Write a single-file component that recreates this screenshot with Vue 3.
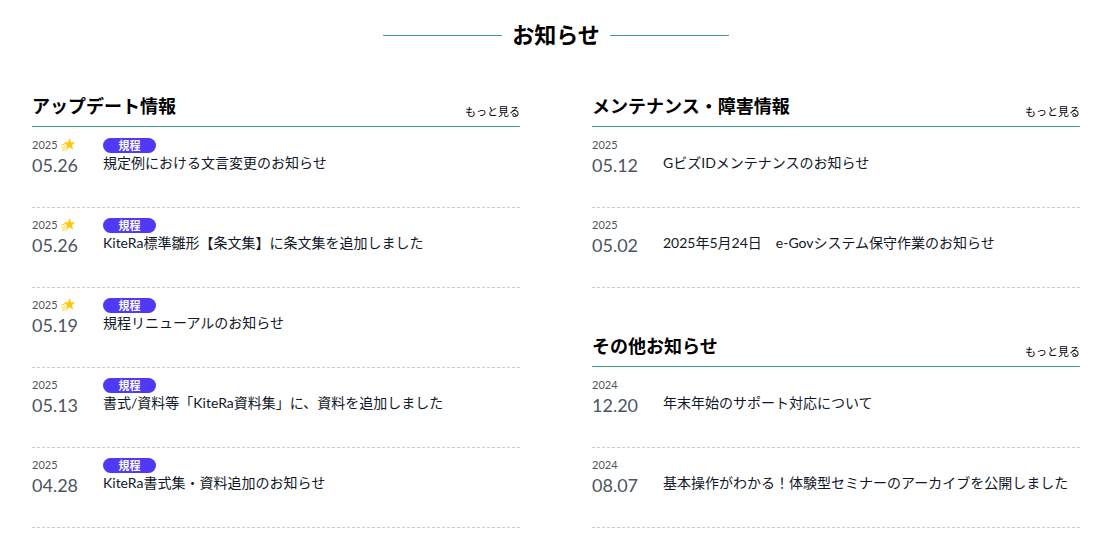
<script setup>
const updates = {
  title: 'アップデート情報',
  items: [
    { year: '2025', day: '05.26', isNew: true, tag: '規程', text: '規定例における文言変更のお知らせ' },
    { year: '2025', day: '05.26', isNew: true, tag: '規程', text: 'KiteRa標準雛形【条文集】に条文集を追加しました' },
    { year: '2025', day: '05.19', isNew: true, tag: '規程', text: '規程リニューアルのお知らせ' },
    { year: '2025', day: '05.13', tag: '規程', text: '書式/資料等「KiteRa資料集」に、資料を追加しました' },
    { year: '2025', day: '04.28', tag: '規程', text: 'KiteRa書式集・資料追加のお知らせ' },
  ],
}
const maintenance = {
  title: 'メンテナンス・障害情報',
  items: [
    { year: '2025', day: '05.12', text: 'GビズIDメンテナンスのお知らせ' },
    { year: '2025', day: '05.02', text: '2025年5月24日　e-Govシステム保守作業のお知らせ' },
  ],
}
const others = {
  title: 'その他お知らせ',
  items: [
    { year: '2024', day: '12.20', text: '年末年始のサポート対応について' },
    { year: '2024', day: '08.07', text: '基本操作がわかる！体験型セミナーのアーカイブを公開しました' },
  ],
}
const columns = [[updates], [maintenance, others]]
</script>

<template>
  <main class="news">
    <h1 class="heading">お知らせ</h1>
    <div class="columns">
      <div v-for="(column, c) in columns" :key="c" class="column">
        <section v-for="section in column" :key="section.title">
          <header class="section-head">
            <h2>{{ section.title }}</h2>
            <a href="#" class="more">もっと見る</a>
          </header>
          <ul class="list">
            <li v-for="item in section.items" :key="item.text" class="item">
              <div class="date">
                <span class="year">
                  {{ item.year }}
                  <svg v-if="item.isNew" class="star" viewBox="0 0 14 14" aria-hidden="true">
                    <path class="star-body" d="M8.6 0.2 10 4.3 14 4.6 11 7.2 12.1 11.6 8.4 9.2 4.9 11.4 5.9 7.2 2.8 4.5 7 4.2Z" />
                    <path class="star-trail" d="M4 5.7 0.5 7.6M4.5 8 0.6 10.4M4.2 10.4 1.2 13M6.5 11 4.3 12.8" />
                  </svg>
                </span>
                <span class="day">{{ item.day }}</span>
              </div>
              <div class="body">
                <span class="tag-row"><span v-if="item.tag" class="tag">{{ item.tag }}</span></span>
                <a href="#" class="text">{{ item.text }}</a>
              </div>
            </li>
          </ul>
        </section>
      </div>
    </div>
  </main>
</template>

<style>
body {
  margin: 0;
  background: #fff;
}
</style>

<style scoped>
.news {
  padding: 18px 40px 18px 32px;
  font-family: Lato, "Noto Sans CJK JP", sans-serif;
  color: #000;
}
h1,
h2,
ul {
  margin: 0;
  padding: 0;
}
a {
  color: inherit;
  text-decoration: none;
}
.heading {
  display: flex;
  align-items: center;
  justify-content: center;
  gap: 10px;
  font-size: 22px;
  line-height: 34px;
}
.heading::before,
.heading::after {
  content: "";
  width: 119px;
  height: 1px;
  background: #3aa28b;
}
.columns {
  display: grid;
  grid-template-columns: 1fr 1fr;
  gap: 72px;
  margin-top: 40px;
}
.column {
  display: flex;
  flex-direction: column;
  gap: 44px;
  min-width: 0;
}
.section-head {
  display: flex;
  align-items: flex-end;
  justify-content: space-between;
  padding-bottom: 6px;
  border-bottom: 1px solid #3aa28b;
}
h2 {
  font-size: 18px;
  line-height: 28px;
}
.more {
  font-size: 11px;
  line-height: 16px;
}
.list {
  padding-top: 1px;
  list-style: none;
}
.item {
  display: flex;
  box-sizing: border-box;
  min-height: 80px;
  padding-top: 9px;
  border-bottom: 1px dashed #ccc;
}
.date {
  display: flex;
  flex-direction: column;
  flex: 0 0 71px;
  color: #4b5563;
}
.year {
  display: flex;
  align-items: center;
  gap: 3px;
  font-size: 11px;
  line-height: 16px;
}
.star {
  width: 14px;
  height: 14px;
}
.star-body {
  fill: #ffc90a;
}
.star-trail {
  fill: none;
  stroke: #ffc90a;
  stroke-width: 1;
}
.day {
  font-size: 18px;
  line-height: 24px;
}
.body {
  display: flex;
  flex-direction: column;
  min-width: 0;
}
.tag-row {
  height: 16px;
}
.tag {
  display: block;
  width: 53px;
  margin-top: 1px;
  border-radius: 8px;
  background: #4f39f6;
  color: #fff;
  font-size: 11px;
  font-weight: 700;
  line-height: 15px;
  text-align: center;
}
.text {
  color: #111827;
  font-size: 14px;
  line-height: 20px;
}
</style>
